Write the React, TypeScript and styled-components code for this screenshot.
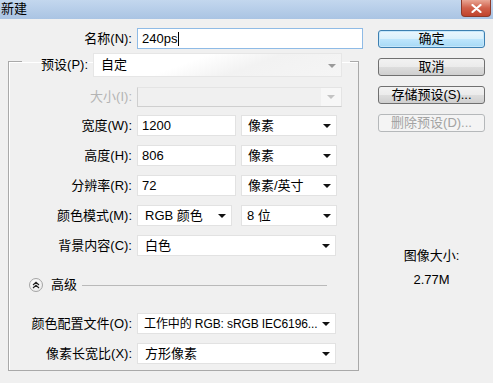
import React from "react";
import styled, { createGlobalStyle } from "styled-components";

const GlobalStyle = createGlobalStyle`
  html, body {
    margin: 0;
    padding: 0;
    background: #f0f0f0;
  }

  body {
    font-family: "Liberation Sans", "Noto Sans CJK SC", sans-serif;
    font-size: 13px;
    color: #000;
  }
`;

const Dialog = styled.div`
  width: 493px;
  height: 383px;
  overflow: hidden;
  background: #f0f0f0;

  display: flex;
  flex-direction: column;
`;

const TitleBar = styled.div`
  height: 19px;
  flex: 0 0 19px;

  display: flex;
  justify-content: space-between;
  align-items: flex-start;

  background: linear-gradient(#c3d7ee, #aac4e3);
`;

const Title = styled.span`
  font-size: 13px;
  line-height: 18px;
  padding-left: 1px;
`;

const CloseButton = styled.div`
  width: 28px;
  height: 16px;
  margin-right: 2px;

  display: flex;
  align-items: center;
  justify-content: center;

  border: 1px solid #8d3a2a;
  border-top: none;
  border-radius: 0 0 4px 4px;
  background: linear-gradient(#e9a694, #d0604a 50%, #c0432c);
`;

const Body = styled.div`
  flex: 1;

  display: flex;
  padding-left: 8px;
`;

const LeftColumn = styled.div`
  width: 355px;

  display: flex;
  flex-direction: column;
`;

const Row = styled.div<{ $top?: number }>`
  height: 21px;
  margin-top: ${(p) => p.$top ?? 9}px;

  display: flex;
  align-items: center;
  gap: 5px;
`;

const Label = styled.span<{ $w?: number; $disabled?: boolean }>`
  width: ${(p) => p.$w ?? 124}px;
  flex: 0 0 auto;
  text-align: right;
  white-space: nowrap;
  line-height: 16px;

  color: ${(p) => (p.$disabled ? "#b4b4b4" : "#000")};
`;

const TextBox = styled.div<{ $w: number; $focused?: boolean }>`
  width: ${(p) => p.$w}px;
  height: 21px;
  box-sizing: border-box;
  padding-left: 4px;

  display: flex;
  align-items: center;

  background: #fff;
  border: 1px solid ${(p) => (p.$focused ? "#8fbbe6" : "#e2e2e2")};
  white-space: nowrap;
`;

const Caret = styled.span`
  width: 1px;
  height: 14px;
  margin-left: 1px;
  background: #000;
`;

const SelectBox = styled.div<{ $w: number; $h?: number; $pad?: number; $gap?: number }>`
  width: ${(p) => p.$w}px;
  height: ${(p) => p.$h ?? 21}px;
  box-sizing: border-box;
  margin-left: ${(p) => p.$gap ?? 0}px;
  padding: 0 5px 0 ${(p) => p.$pad ?? 7}px;

  display: flex;
  align-items: center;
  gap: 3px;

  background: #fff;
  border: 1px solid #e2e2e2;
`;

const SelectText = styled.span<{ $tight?: boolean }>`
  flex: 1;
  min-width: 0;
  overflow: hidden;
  white-space: nowrap;
  line-height: 16px;
  font-size: ${(p) => (p.$tight ? "12px" : "13px")};
  letter-spacing: ${(p) => (p.$tight ? "-0.1px" : "normal")};
`;

const Arrow = styled.span<{ $color?: string }>`
  width: 0;
  height: 0;
  flex: 0 0 auto;
  margin-top: 1px;

  border-left: 4px solid transparent;
  border-right: 4px solid transparent;
  border-top: 4px solid ${(p) => p.$color ?? "#111"};
`;

const PresetSelect = styled(SelectBox)`
  border-color: #e6e6e6;
  background: linear-gradient(160deg, #fff 38%, #f2f2f2 62%, #f5f5f5);
`;

const DisabledSelect = styled.div`
  width: 205px;
  height: 20px;
  box-sizing: border-box;

  display: flex;
  justify-content: flex-end;

  border: 1px solid #cfcfcf;
  border-top-color: #e4e4e4;
  border-right-color: #e4e4e4;
  background: #f0f0f0;
`;

const DisabledDrop = styled.div`
  width: 20px;

  display: flex;
  align-items: center;
  justify-content: center;

  background: #f7f7f7;
`;

const Frame = styled.fieldset`
  width: 351px;
  box-sizing: border-box;
  margin: 4px 0 0;
  padding: 0 0 6px;

  border: 1px solid #a9a9a9;
  box-shadow: inset 1px 1px 0 #fff;
`;

const Legend = styled.legend`
  margin-left: 13px;
  padding: 0 8px 0 0;
  height: 16px;
`;

const LegendInner = styled.div`
  height: 24px;

  display: flex;
  align-items: center;
  gap: 5px;
`;

const AdvancedRow = styled.div`
  height: 14px;
  margin-top: 22px;
  padding-left: 20px;
  padding-right: 31px;

  display: flex;
  align-items: center;
`;

const ExpandIcon = styled.span`
  width: 14px;
  height: 14px;
  box-sizing: border-box;

  display: flex;
  align-items: center;
  justify-content: center;

  border: 1px solid #a5a5a5;
  border-radius: 50%;
  background: radial-gradient(circle at 40% 35%, #fff, #e6e6e6);
`;

const AdvancedText = styled.span`
  margin-left: 8px;
  line-height: 16px;
`;

const Rule = styled.div`
  flex: 1;
  height: 1px;
  margin-left: 5px;
  background: #b9b9b9;
`;

const RightColumn = styled.div`
  width: 107px;
  margin-left: 15px;
  padding-top: 11px;

  display: flex;
  flex-direction: column;
  gap: 10px;
`;

const Button = styled.div<{ $primary?: boolean; $disabled?: boolean }>`
  height: 18px;
  box-sizing: border-box;

  display: flex;
  align-items: center;
  justify-content: center;

  line-height: 16px;
  border-radius: 3px;
  border: 1px solid
    ${(p) => (p.$primary ? "#3c7fb1" : p.$disabled ? "#b5b8ba" : "#707070")};
  background: ${(p) =>
    p.$primary
      ? "linear-gradient(#eaf6fd, #d9f0fc 50%, #bee6fd 51%, #a7d9f5)"
      : p.$disabled
      ? "#f4f4f4"
      : "linear-gradient(#f2f2f2, #ebebeb 50%, #dddddd 51%, #cfcfcf)"};
  box-shadow: ${(p) => (p.$primary ? "inset 0 0 0 1px #c5e7fb" : "none")};
  color: ${(p) => (p.$disabled ? "#a3a3a3" : "#000")};
`;

const ImageSize = styled.div`
  margin-top: 102px;
  line-height: 24px;
  text-align: center;
`;

const Chevrons = () => (
  <svg width="8" height="8" viewBox="0 0 8 8">
    <path d="M1 4 L4 1.3 L7 4 M1 7 L4 4.3 L7 7" fill="none" stroke="#222" strokeWidth="1.2" />
  </svg>
);

const CloseX = () => (
  <svg width="11" height="9" viewBox="0 0 11 9">
    <path d="M1.5 1 L9.5 8 M9.5 1 L1.5 8" stroke="#fff" strokeWidth="2.2" strokeLinecap="round" />
  </svg>
);

const Dropdown: React.FC<{
  w: number;
  pad?: number;
  gap?: number;
  tight?: boolean;
  children: React.ReactNode;
}> = ({ w, pad, gap, tight, children }) => (
  <SelectBox $w={w} $pad={pad} $gap={gap}>
    <SelectText $tight={tight}>{children}</SelectText>
    <Arrow />
  </SelectBox>
);

const App: React.FC = () => {
  return (
    <>
      <GlobalStyle />
      <Dialog>
        <TitleBar>
          <Title>新建</Title>
          <CloseButton>
            <CloseX />
          </CloseButton>
        </TitleBar>

        <Body>
          <LeftColumn>
            <Row $top={9}>
              <Label>名称(N):</Label>
              <TextBox $w={226} $focused>
                240ps
                <Caret />
              </TextBox>
            </Row>

            <Frame>
              <Legend>
                <LegendInner>
                  <Label $w={66}>预设(P):</Label>
                  <PresetSelect $w={249} $h={24}>
                    <SelectText>自定</SelectText>
                    <Arrow $color="#9a9a9a" />
                  </PresetSelect>
                </LegendInner>
              </Legend>

              <Row $top={17}>
                <Label $w={123} $disabled>
                  大小(I):
                </Label>
                <DisabledSelect>
                  <DisabledDrop>
                    <Arrow $color="#c4c4c4" />
                  </DisabledDrop>
                </DisabledSelect>
              </Row>

              <Row $top={8}>
                <Label $w={123}>宽度(W):</Label>
                <TextBox $w={99}>1200</TextBox>
                <Dropdown w={96} pad={6}>像素</Dropdown>
              </Row>

              <Row>
                <Label $w={123}>高度(H):</Label>
                <TextBox $w={99}>806</TextBox>
                <Dropdown w={96} pad={6}>像素</Dropdown>
              </Row>

              <Row>
                <Label $w={123}>分辨率(R):</Label>
                <TextBox $w={99}>72</TextBox>
                <Dropdown w={96} pad={6}>像素/英寸</Dropdown>
              </Row>

              <Row>
                <Label $w={123}>颜色模式(M):</Label>
                <Dropdown w={95}>RGB 颜色</Dropdown>
                <Dropdown w={96} pad={5} gap={4}>8 位</Dropdown>
              </Row>

              <Row>
                <Label $w={123}>背景内容(C):</Label>
                <Dropdown w={199}>白色</Dropdown>
              </Row>

              <AdvancedRow>
                <ExpandIcon>
                  <Chevrons />
                </ExpandIcon>
                <AdvancedText>高级</AdvancedText>
                <Rule />
              </AdvancedRow>

              <Row $top={21}>
                <Label $w={123}>颜色配置文件(O):</Label>
                <Dropdown w={199} pad={6} tight>
                  工作中的 RGB: sRGB IEC6196...
                </Dropdown>
              </Row>

              <Row>
                <Label $w={123}>像素长宽比(X):</Label>
                <Dropdown w={199}>方形像素</Dropdown>
              </Row>
            </Frame>
          </LeftColumn>

          <RightColumn>
            <Button $primary>确定</Button>
            <Button>取消</Button>
            <Button>存储预设(S)...</Button>
            <Button $disabled>删除预设(D)...</Button>
            <ImageSize>
              图像大小:
              <br />
              2.77M
            </ImageSize>
          </RightColumn>
        </Body>
      </Dialog>
    </>
  );
};

export default App;
